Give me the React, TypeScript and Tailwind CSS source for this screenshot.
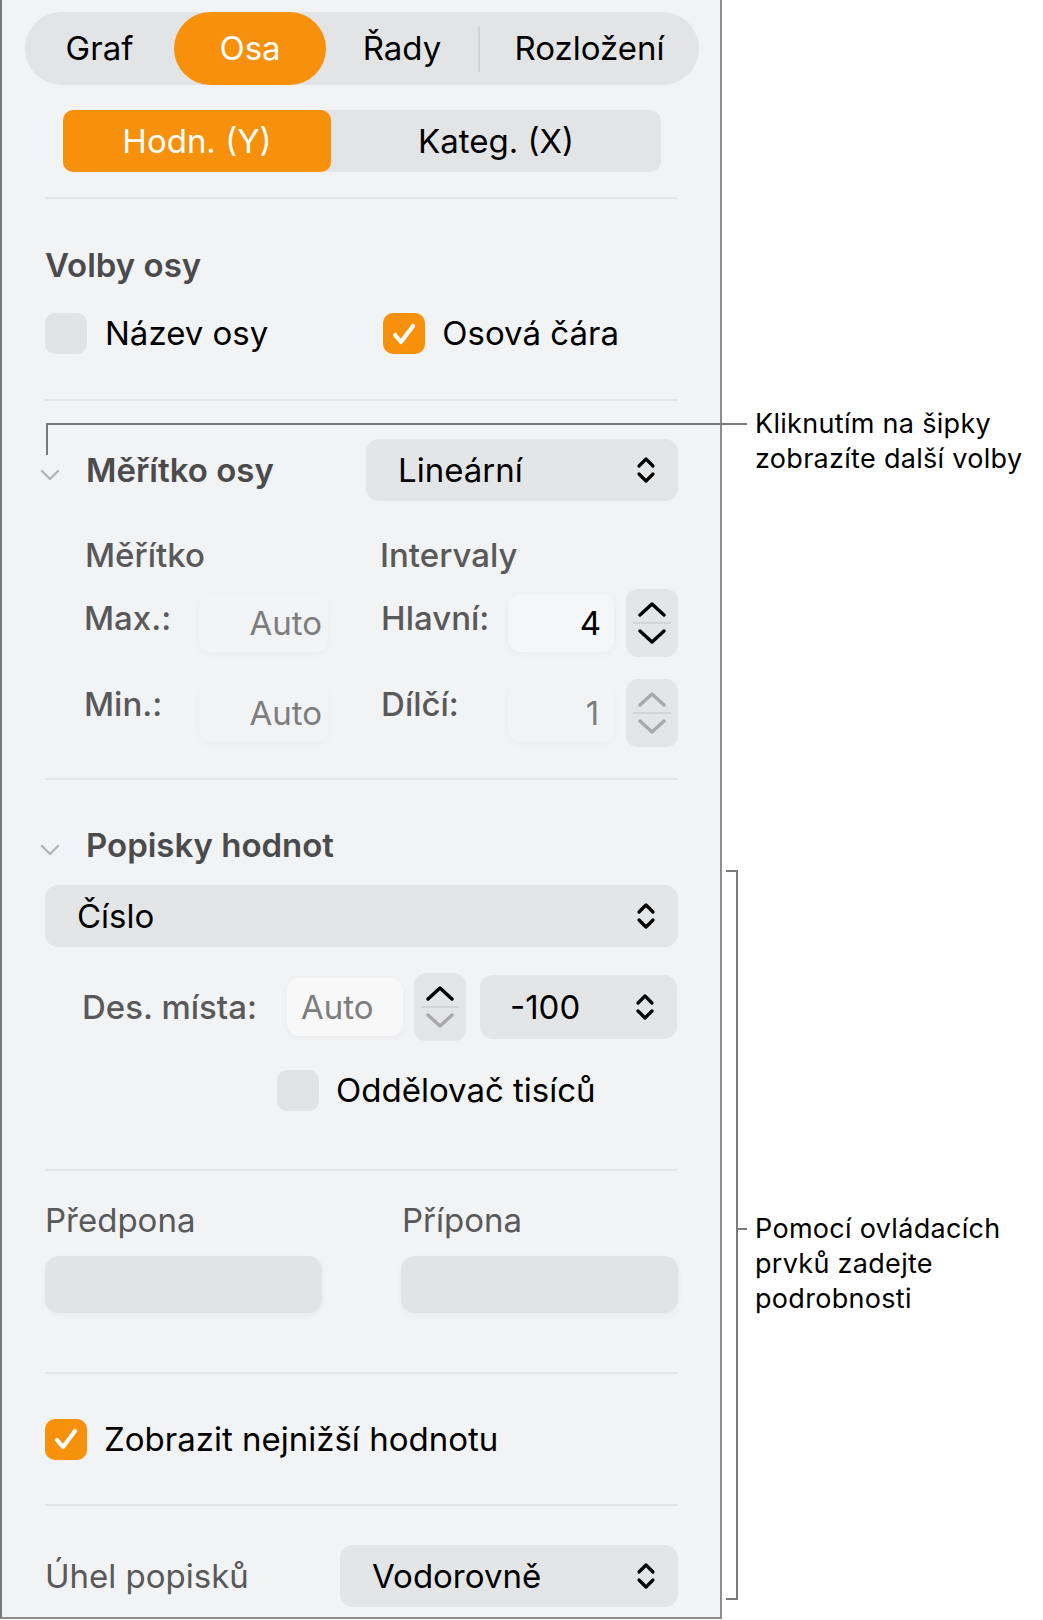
import React from 'react';

const ORANGE = 'bg-[#f7900b]';

function UpDown({ className = '' }: { className?: string }) {
  return (
    <svg width="20" height="30" viewBox="0 0 20 30" className={className} fill="none" stroke="currentColor" strokeWidth="3.2" strokeLinecap="round" strokeLinejoin="round">
      <polyline points="3,11 10,4 17,11" />
      <polyline points="3,19 10,26 17,19" />
    </svg>
  );
}

function Chevron({ up, className = '' }: { up?: boolean; className?: string }) {
  return (
    <svg width="30" height="16" viewBox="0 0 30 16" className={className} fill="none" stroke="currentColor" strokeWidth="3.4" strokeLinecap="round" strokeLinejoin="round">
      {up ? <polyline points="3,14 15,3 27,14" /> : <polyline points="3,2 15,13 27,2" />}
    </svg>
  );
}

function Stepper({ disabled, downDim, className = '' }: { disabled?: boolean; downDim?: boolean; className?: string }) {
  const upColor = disabled ? 'text-[#a9a9ab]' : 'text-black';
  const downColor = disabled || downDim ? 'text-[#a9a9ab]' : 'text-black';
  return (
    <div className={`w-[52px] h-[68px] rounded-[12px] bg-[#e4e5e7] flex flex-col items-center justify-center ${className}`}>
      <Chevron up className={upColor} />
      <div className="w-[38px] h-[2px] bg-[#d3d4d6] my-[5px]" />
      <Chevron className={downColor} />
    </div>
  );
}

function Check({ checked }: { checked?: boolean }) {
  if (!checked) return <div className="w-[42px] h-[41px] rounded-[10px] bg-[#e2e3e5] shrink-0" />;
  return (
    <div className={`w-[42px] h-[41px] rounded-[10px] ${ORANGE} shrink-0 flex items-center justify-center`}>
      <svg width="26" height="24" viewBox="0 0 26 24" fill="none" stroke="white" strokeWidth="4.2" strokeLinecap="round" strokeLinejoin="round">
        <polyline points="4,13 10,20 22,4" />
      </svg>
    </div>
  );
}

function Popup({ label, className = '' }: { label: string; className?: string }) {
  return (
    <div className={`h-[62px] rounded-[13px] bg-[#e4e5e7] flex items-center justify-between pl-[32px] pr-[22px] text-black ${className}`}>
      <span>{label}</span>
      <UpDown />
    </div>
  );
}

function Divider({ className = '' }: { className?: string }) {
  return <div className={`h-[2px] bg-[#e3e4e6] ${className}`} />;
}

function Collapse() {
  return (
    <svg width="20" height="12" viewBox="0 0 20 12" className="text-[#b3b4b6] absolute left-[-46px] top-[15px]" fill="none" stroke="currentColor" strokeWidth="2.4" strokeLinecap="round" strokeLinejoin="round">
      <polyline points="2,2 10,10 18,2" />
    </svg>
  );
}

export default function App() {
  return (
    <div className="relative w-[1043px] h-[1620px] bg-white text-[33px] leading-none" style={{ fontFamily: 'Inter, "Noto Sans", sans-serif' }}>
      <div className="w-[722px] h-[1619px] bg-[#f2f3f5] border-l-2 border-r-2 border-b-2 border-l-[#77787a] border-r-[#8c8d8f] border-b-[#8c8d8f] flex flex-col">
        {/* tab bar */}
        <div className="mt-[12px] ml-[23px] w-[674px] h-[73px] rounded-full bg-[#e3e4e6] flex items-center text-black">
          <div className="w-[149px] text-center">Graf</div>
          <div className={`w-[152px] h-[73px] rounded-full ${ORANGE} text-white flex items-center justify-center`}>Osa</div>
          <div className="w-[152px] text-center">Řady</div>
          <div className="w-[2px] h-[46px] bg-[#d2d3d5]" />
          <div className="flex-1 text-center">Rozložení</div>
        </div>

        {/* value / category */}
        <div className="mt-[25px] ml-[61px] w-[598px] h-[62px] rounded-[11px] bg-[#e3e4e6] flex items-center text-black">
          <div className={`w-[268px] h-[62px] rounded-[10px] ${ORANGE} text-white flex items-center justify-center`}>Hodn. (Y)</div>
          <div className="flex-1 text-center">Kateg. (X)</div>
        </div>

        <div className="pl-[43px] pr-[42px] flex flex-col">
          <Divider className="mt-[25px]" />

          <div className="mt-[46px] h-[40px] flex items-center font-semibold text-[#4b4b4d]">Volby osy</div>

          <div className="mt-[28px] h-[41px] flex items-center">
            <Check />
            <span className="ml-[18px] text-black">Název osy</span>
            <div className="ml-[115px] flex items-center">
              <Check checked />
              <span className="ml-[17px] text-black">Osová čára</span>
            </div>
          </div>

          <Divider className="mt-[45px]" />

          {/* axis scale */}
          <div className="mt-[38px] h-[62px] flex items-center justify-between">
            <div className="relative ml-[41px] font-semibold text-[#4b4b4d]">
              <Collapse />
              Měřítko osy
            </div>
            <Popup label="Lineární" className="w-[312px]" />
          </div>

          <div className="mt-[34px] h-[40px] flex items-center font-medium text-[#59595b]">
            <span className="ml-[40px] w-[295px]">Měřítko</span>
            <span>Intervaly</span>
          </div>

          <div className="mt-[14px] h-[68px] flex items-center text-[#59595b]">
            <span className="ml-[39px] w-[115px] -mt-[10px] font-medium">Max.:</span>
            <div className="w-[130px] h-[58px] rounded-[12px] bg-[#f2f3f5] shadow-[0_2px_8px_rgba(0,0,0,0.035)] flex items-center justify-end pr-[6px] text-[#7d7d7f]">Auto</div>
            <span className="ml-[53px] w-[127px] -mt-[10px] font-medium">Hlavní:</span>
            <div className="w-[107px] h-[58px] rounded-[12px] bg-[#f5f6f8] shadow-[0_2px_8px_rgba(0,0,0,0.035)] flex items-center justify-end pr-[13px] text-black">4</div>
            <Stepper className="ml-[12px]" />
          </div>

          <div className="mt-[22px] h-[68px] flex items-center text-[#59595b]">
            <span className="ml-[39px] w-[115px] -mt-[18px] font-medium">Min.:</span>
            <div className="w-[130px] h-[58px] rounded-[12px] bg-[#f2f3f5] shadow-[0_2px_8px_rgba(0,0,0,0.03)] flex items-center justify-end pr-[6px] text-[#7d7d7f]">Auto</div>
            <span className="ml-[53px] w-[127px] -mt-[18px] font-medium">Dílčí:</span>
            <div className="w-[107px] h-[58px] rounded-[12px] bg-[#f2f3f5] shadow-[0_2px_8px_rgba(0,0,0,0.03)] flex items-center justify-end pr-[15px] text-[#7d7d7f]">1</div>
            <Stepper disabled className="ml-[12px]" />
          </div>

          <Divider className="mt-[31px]" />

          {/* value labels */}
          <div className="relative mt-[45px] h-[40px] flex items-center">
            <div className="relative ml-[41px] font-semibold text-[#4b4b4d]">
              <Collapse />
              Popisky hodnot
            </div>
          </div>

          <Popup label="Číslo" className="mt-[20px]" />

          <div className="mt-[26px] h-[68px] flex items-center">
            <span className="ml-[37px] w-[205px] font-medium text-[#59595b]">Des. místa:</span>
            <div className="w-[116px] h-[58px] rounded-[12px] bg-[#f8f8f9] shadow-[0_1px_6px_rgba(0,0,0,0.04)] flex items-center pl-[14px] text-[#7d7d7f]">Auto</div>
            <Stepper downDim className="ml-[11px]" />
            <div className="ml-[14px] w-[197px] h-[64px] rounded-[13px] bg-[#e4e5e7] flex items-center justify-between pl-[30px] pr-[22px] text-black">
              <span>-100</span>
              <UpDown />
            </div>
          </div>

          <div className="mt-[29px] h-[41px] flex items-center">
            <div className="ml-[232px]" />
            <Check />
            <span className="ml-[17px] text-black">Oddělovač tisíců</span>
          </div>

          <Divider className="mt-[58px]" />

          <div className="mt-[29px] h-[40px] flex items-center text-[#59595b]">
            <span className="w-[357px]">Předpona</span>
            <span>Přípona</span>
          </div>

          <div className="mt-[16px] flex justify-between">
            <div className="w-[277px] h-[57px] rounded-[14px] bg-[#e2e3e5] shadow-[0_2px_6px_rgba(0,0,0,0.04)]" />
            <div className="w-[277px] h-[57px] rounded-[14px] bg-[#e2e3e5] shadow-[0_2px_6px_rgba(0,0,0,0.04)]" />
          </div>

          <Divider className="mt-[59px]" />

          <div className="mt-[44px] h-[42px] flex items-center">
            <Check checked />
            <span className="ml-[17px] text-black">Zobrazit nejnižší hodnotu</span>
          </div>

          <Divider className="mt-[44px]" />

          <div className="mt-[39px] h-[62px] flex items-center justify-between">
            <span className="text-[#59595b]">Úhel popisků</span>
            <Popup label="Vodorovně" className="w-[338px]" />
          </div>
        </div>
      </div>

      {/* callout: scale arrows */}
      <div className="absolute left-[46px] top-[423px] w-[701px] h-[2px] bg-[#7a7a7c]" />
      <div className="absolute left-[46px] top-[423px] w-[2px] h-[32px] bg-[#7a7a7c]" />
      <div className="absolute left-[755px] top-[406px] text-[27px] leading-[35px] text-black tracking-[0.3px]">
        <div>Kliknutím na šipky</div>
        <div>zobrazíte další volby</div>
      </div>

      {/* callout: bracket */}
      <div className="absolute left-[726px] top-[870px] w-[12px] h-[730px] border-t-2 border-r-2 border-b-2 border-[#7a7a7c]" />
      <div className="absolute left-[736px] top-[1228px] w-[11px] h-[2px] bg-[#7a7a7c]" />
      <div className="absolute left-[755px] top-[1211px] text-[27px] leading-[35px] text-black tracking-[0.3px]">
        <div>Pomocí ovládacích</div>
        <div>prvků zadejte</div>
        <div>podrobnosti</div>
      </div>
    </div>
  );
}
